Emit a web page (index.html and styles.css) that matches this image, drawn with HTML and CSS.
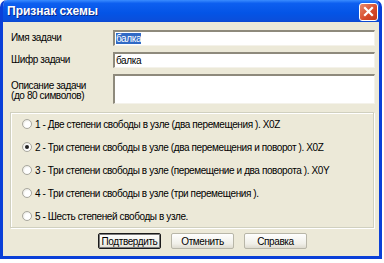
FILE: index.html
```html
<!DOCTYPE html>
<html lang="ru">
<head>
<meta charset="utf-8"/>
<title>Признак схемы</title>
<link rel="stylesheet" href="styles.css">
</head>
<body>
<div class="window">
  <div class="titlebar">
    <span class="title">Признак схемы</span>
    <span class="close">
      <svg width="11" height="11" viewBox="0 0 11 11"><path d="M2 2 L9 9 M9 2 L2 9" stroke="#fff" stroke-width="2.2" stroke-linecap="square"/></svg>
    </span>
  </div>
  <div class="content">
    <div class="row">
      <label>Имя задачи</label>
      <div class="field"><span class="sel">балка</span></div>
    </div>
    <div class="row">
      <label>Шифр задачи</label>
      <div class="field">балка</div>
    </div>
    <div class="row row-desc">
      <label>Описание задачи<br>(до 80 символов)</label>
      <div class="field area"></div>
    </div>
    <div class="group">
      <div class="opt"><span class="radio"></span>1 - Две степени свободы в узле (два перемещения ). X0Z</div>
      <div class="opt"><span class="radio on"></span>2 - Три степени свободы в узле (два перемещения и поворот ). X0Z</div>
      <div class="opt"><span class="radio"></span>3 - Три степени свободы в узле (перемещение и два поворота ). X0Y</div>
      <div class="opt"><span class="radio"></span>4 - Три степени свободы в узле (три перемещения ).</div>
      <div class="opt"><span class="radio"></span>5 - Шесть степеней свободы в узле.</div>
    </div>
    <div class="buttons">
      <button class="btn default">Подтвердить</button>
      <button class="btn">Отменить</button>
      <button class="btn">Справка</button>
    </div>
  </div>
</div>
</body>
</html>
```

FILE: styles.css
```css
body {
  margin: 0;
  background: #ffffff;
  font-family: "Liberation Sans", Arial, sans-serif;
  font-size: 10px;
  letter-spacing: -0.4px;
  color: #000;
}
.window {
  width: 376px;
  height: 256px;
  border: 3px solid #0a3fd8;
  border-top: none;
  border-radius: 7px 7px 0 0;
  background: #ece9d8;
  display: flex;
  flex-direction: column;
  overflow: hidden;
}
.titlebar {
  height: 22px;
  margin: 0 -3px;
  padding: 0 4px 0 7px;
  display: flex;
  align-items: center;
  justify-content: space-between;
  background: linear-gradient(to bottom, #3a8cff 0%, #0d5ff0 15%, #0454e6 60%, #0a4fdc 90%, #0b47d0 100%);
  border-radius: 7px 7px 0 0;
}
.title {
  color: #fff;
  font-weight: bold;
  font-size: 12px;
  letter-spacing: 0;
  text-shadow: 1px 1px 0 #0a2a8a;
}
.close {
  width: 17px;
  height: 16px;
  margin-top: 1px;
  border: 1px solid #fff;
  border-radius: 3px;
  background: linear-gradient(to bottom right, #e98a6c, #d5492a 60%, #c43a1c);
  display: flex;
  align-items: center;
  justify-content: center;
}
.content {
  flex: 1;
  padding: 8px 4px 0 8px;
  display: flex;
  flex-direction: column;
}
.row {
  display: flex;
  align-items: center;
  height: 15px;
  margin-bottom: 7px;
}
.row label {
  width: 102px;
  line-height: 10px;
}
.field {
  flex: 1;
  height: 13px;
  background: #fff;
  border-top: 2px solid #8e8a7c;
  border-left: 2px solid #8e8a7c;
  border-right: 1px solid #f4f2ea;
  border-bottom: 1px solid #f4f2ea;
  padding-left: 1px;
  line-height: 13px;
}
.sel {
  background: #316ac5;
  color: #fff;
}
.row-desc {
  height: 30px;
  align-items: flex-start;
  margin-bottom: 8px;
}
.row-desc label {
  padding-top: 7px;
}
.area {
  height: 27px;
}
.group {
  width: 351px;
  height: 108px;
  margin-left: -1px;
  border: 1px solid #d0d0bf;
  box-shadow: inset 1px 1px 0 #fff, 1px 1px 0 #fff;
  padding: 6px 0 0 11px;
  display: flex;
  flex-direction: column;
  gap: 13px;
}
.opt {
  display: flex;
  align-items: center;
  height: 10px;
  white-space: nowrap;
}
.radio {
  width: 8px;
  height: 8px;
  border-radius: 50%;
  border: 1px solid #a9a89f;
  background: radial-gradient(circle at 60% 60%, #ffffff 40%, #dcdad0 100%);
  margin-right: 3px;
  position: relative;
}
.radio.on::after {
  content: "";
  position: absolute;
  left: 2px;
  top: 2px;
  width: 4px;
  height: 4px;
  border-radius: 50%;
  background: #222;
}
.buttons {
  display: flex;
  gap: 10px;
  margin-top: 5px;
  padding-left: 87px;
}
.btn {
  width: 63px;
  height: 16px;
  padding: 0;
  font-family: inherit;
  font-size: 10px;
  letter-spacing: -0.4px;
  background: linear-gradient(to bottom, #fefefe, #f0efe8 70%, #dedbd0);
  border: 1px solid #b8b6a8;
  border-radius: 2px;
  color: #000;
}
.btn.default {
  border: 1px solid #1a1a1a;
  box-shadow: inset 0 0 0 1px #7c7c7c;
}
```
